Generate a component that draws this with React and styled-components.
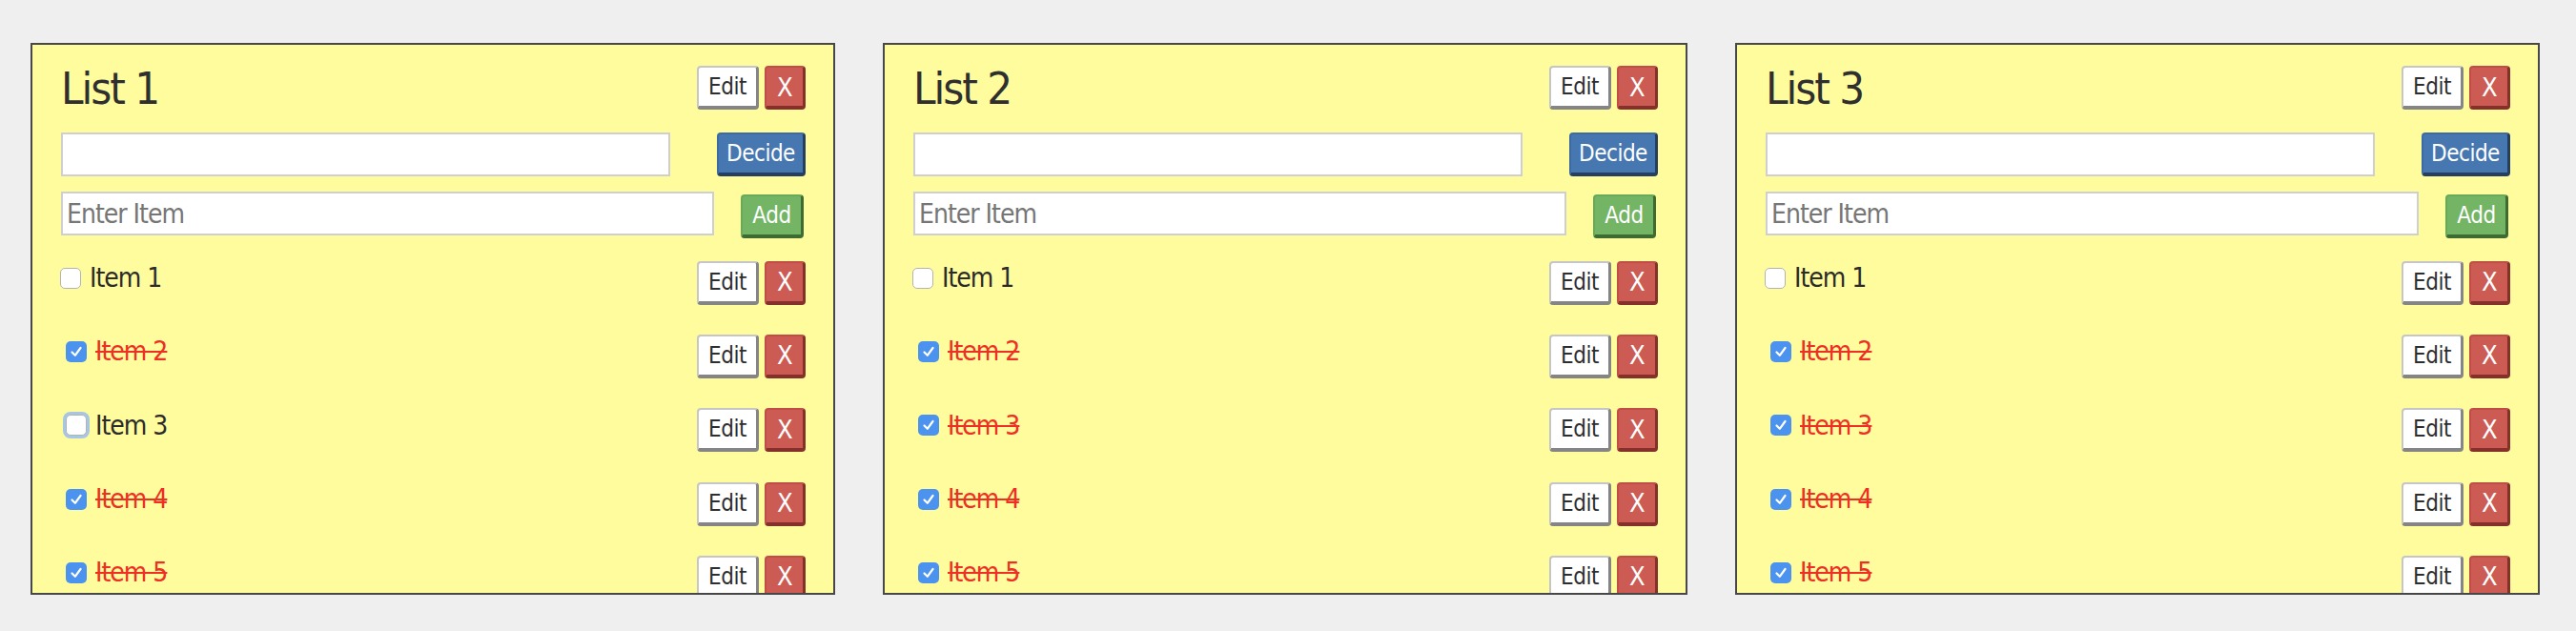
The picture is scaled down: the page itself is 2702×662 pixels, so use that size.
import React from 'react';
import styled, { createGlobalStyle } from 'styled-components';

const GlobalStyle = createGlobalStyle`
  body {
    margin: 0;
    background: #efefef;
    font-family: "Liberation Sans Narrow", "DejaVu Sans Condensed", "Liberation Sans", sans-serif;
  }
`;

const lists = [
    {
        title: 'List 1',
        items: [
            { label: 'Item 1', done: false },
            { label: 'Item 2', done: true },
            { label: 'Item 3', done: false, focused: true },
            { label: 'Item 4', done: true },
            { label: 'Item 5', done: true },
        ],
    },
    {
        title: 'List 2',
        items: [
            { label: 'Item 1', done: false },
            { label: 'Item 2', done: true },
            { label: 'Item 3', done: true },
            { label: 'Item 4', done: true },
            { label: 'Item 5', done: true },
        ],
    },
    {
        title: 'List 3',
        items: [
            { label: 'Item 1', done: false },
            { label: 'Item 2', done: true },
            { label: 'Item 3', done: true },
            { label: 'Item 4', done: true },
            { label: 'Item 5', done: true },
        ],
    },
];

// button colours: face, light edge, dark edge, text
const tones = {
    plain: ['#ffffff', '#c6c6c6', '#858585', '#2e2e2e'],
    danger: ['#cc5b53', '#c04d46', '#86302b', '#ffffff'],
    primary: ['#4677b1', '#3d6ba1', '#243f62', '#ffffff'],
    success: ['#73b564', '#69aa5a', '#3d6c33', '#ffffff'],
};

const Board = styled.div`
    display: flex;
    gap: 50px;
    padding: 45px 0 0 32px;
    height: 662px;
    box-sizing: border-box;
`;

const Card = styled.section`
    flex: 0 0 844px;
    height: 579px;
    box-sizing: border-box;
    border: 2px solid #474747;
    background: #fffc9e;
    padding: 22px 29px 0 30px;
    overflow: hidden;
`;

const Header = styled.div`
    display: flex;
    justify-content: space-between;
    align-items: center;
    height: 46px;
`;

const Title = styled.h2`
    margin: 0;
    font-weight: normal;
    font-size: 47px;
    line-height: 1;
    letter-spacing: -2px;
    color: #2f2f2f;
`;

const ButtonGroup = styled.div`
    display: flex;
    gap: 6px;
`;

const Button = styled.button`
    width: ${p => p.$w}px;
    height: 46px;
    box-sizing: border-box;
    padding: 0;
    font-family: inherit;
    font-size: ${p => (p.$big ? 27 : 24)}px;
    letter-spacing: -0.5px;
    color: ${p => tones[p.$tone][3]};
    background: ${p => tones[p.$tone][0]};
    border-style: solid;
    border-width: 2px 3px 4px 2px;
    border-color: ${p => tones[p.$tone][1]} ${p => tones[p.$tone][2]} ${p => tones[p.$tone][2]} ${p => tones[p.$tone][1]};
    border-radius: 4px;
`;

const FormRow = styled.div`
    display: flex;
    justify-content: space-between;
    align-items: flex-start;
    margin-top: ${p => p.$top}px;
`;

const TextBox = styled.input`
    width: ${p => p.$w}px;
    height: 46px;
    box-sizing: border-box;
    border: 2px solid #cfcfcf;
    background: #fff;
    padding: 0 4px;
    font-family: inherit;
    font-size: 28px;
    letter-spacing: -1px;
    color: #333;
    outline: none;

    &::placeholder {
        color: #767676;
    }
`;

const ItemList = styled.ul`
    list-style: none;
    margin: 8px 0 0;
    padding: 0;
`;

const ItemRow = styled.li`
    display: flex;
    justify-content: space-between;
    align-items: center;
    height: 77.3px;
`;

const ItemLabel = styled.label`
    display: flex;
    align-items: center;
    gap: 9px;
    margin: 0 0 10px ${p => (p.$first ? -1 : 5)}px;
    font-size: 28px;
    letter-spacing: -1px;
    color: ${p => (p.$done ? '#ee2f24' : '#2b2b2b')};
    text-decoration: ${p => (p.$done ? 'line-through' : 'none')};
    text-decoration-thickness: 2px;
`;

const Box = styled.span`
    display: flex;
    align-items: center;
    justify-content: center;
    width: 22px;
    height: 22px;
    box-sizing: border-box;
    border-radius: 5px;
    background: ${p => (p.$checked ? '#4b93ee' : '#fff')};
    border: ${p => (p.$checked ? 'none' : '1px solid #b3b3b3')};
    box-shadow: ${p => (p.$focused ? '0 0 0 3px #a7c6e4' : 'none')};
`;

function Check({ checked, focused }) {
    return (
        <Box $checked={checked} $focused={focused}>
            {checked && (
                <svg width="14" height="14" viewBox="0 0 14 14">
                    <path d="M2.5 7.5 L5.8 10.8 L11.5 3" fill="none" stroke="#fff" strokeWidth="2.2" strokeLinecap="round" strokeLinejoin="round" />
                </svg>
            )}
        </Box>
    );
}

function ListCard({ list }) {
    return (
        <Card>
            <Header>
                <Title>{list.title}</Title>
                <ButtonGroup>
                    <Button $tone="plain" $w={65}>Edit</Button>
                    <Button $tone="danger" $w={43} $big>X</Button>
                </ButtonGroup>
            </Header>
            <FormRow $top={24}>
                <TextBox $w={639} />
                <Button $tone="primary" $w={93}>Decide</Button>
            </FormRow>
            <FormRow $top={16}>
                <TextBox $w={685} placeholder="Enter Item" />
                <Button $tone="success" $w={66} style={{ marginTop: 3, marginRight: 2 }}>Add</Button>
            </FormRow>
            <ItemList>
                {list.items.map((item, i) => (
                    <ItemRow key={item.label}>
                        <ItemLabel $done={item.done} $first={i === 0}>
                            <Check checked={item.done} focused={item.focused} />
                            {item.label}
                        </ItemLabel>
                        <ButtonGroup>
                            <Button $tone="plain" $w={65}>Edit</Button>
                            <Button $tone="danger" $w={43} $big>X</Button>
                        </ButtonGroup>
                    </ItemRow>
                ))}
            </ItemList>
        </Card>
    );
}

export default function App() {
    return (
        <>
            <GlobalStyle />
            <Board>
                {lists.map(list => <ListCard key={list.title} list={list} />)}
            </Board>
        </>
    );
}
